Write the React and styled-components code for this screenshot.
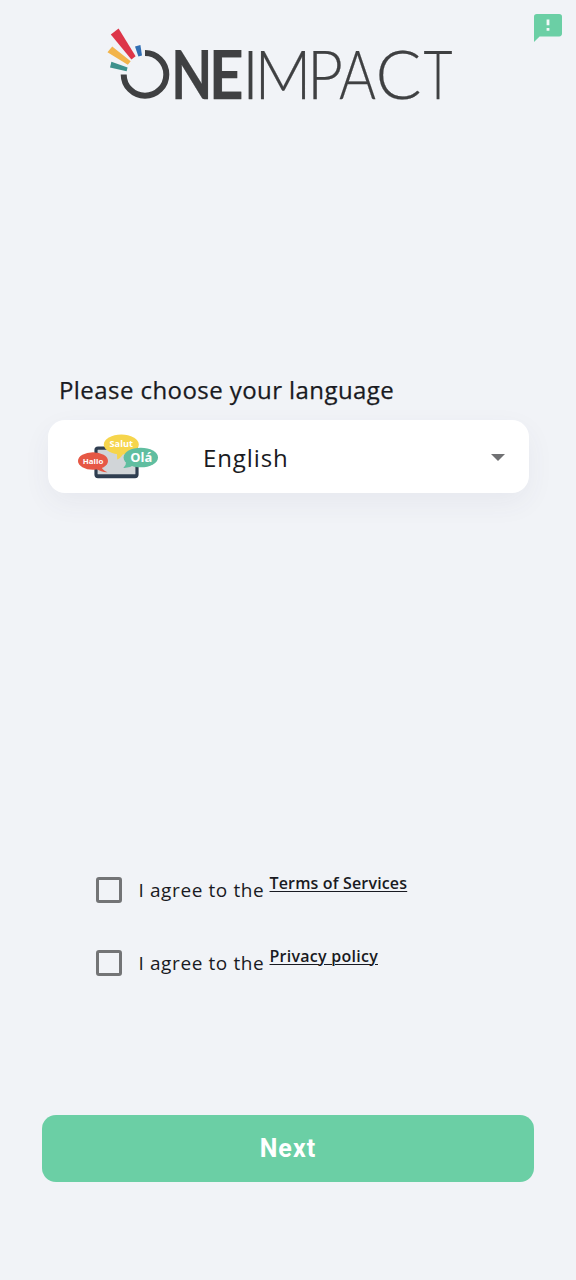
import React from "react";
import styled, { createGlobalStyle } from "styled-components";

const wordmark = [
  { char: "N", x: 171.2, length: 41, weight: 700 },
  { char: "E", x: 209, length: 34.5, weight: 700 },
  { char: "I", x: 242, length: 17, weight: 300 },
  { char: "M", x: 254.5, length: 57, weight: 300 },
  { char: "P", x: 307, length: 36, weight: 300 },
  { char: "A", x: 339, length: 37, weight: 300 },
  { char: "C", x: 375.5, length: 46, weight: 300 },
  { char: "T", x: 423.5, length: 29, weight: 300 },
];

const agreements = [
  { id: "terms", label: "Terms of Services", spacing: "0.16px" },
  { id: "privacy", label: "Privacy policy", spacing: "0.26px" },
];

const Logo = () => (
  <LogoSvg viewBox="106 26 348 76">
    <path d="M110.8 34.4L118.6 28.4L135.6 56.2L131.4 59.6Z" fill="#dd3549" />
    <path d="M107.5 52.3L112.2 46.5L130.7 61.3L127.8 64.8Z" fill="#f2b44b" />
    <path d="M110 67.6L111.4 61.8L127.6 67.5L126.6 71.2Z" fill="#3d918d" />
    <path d="M135 46.6L140.4 45L142 55.4L138.4 56.6Z" fill="#316fb4" />
    <path
      d="M145 53.1A21.3 21.3 0 1 1 123.7 74.4"
      fill="none"
      stroke="#3f4042"
      strokeWidth="6"
    />
    {wordmark.map(({ char, x, length, weight }) => (
      <text
        key={char}
        x={x}
        y="98.7"
        textLength={length}
        lengthAdjust="spacingAndGlyphs"
        fontFamily="Lato, sans-serif"
        fontSize="67"
        fontWeight={weight}
        fill="#3f4042"
        stroke="#3f4042"
        strokeWidth="0.25"
      >
        {char}
      </text>
    ))}
  </LogoSvg>
);

const FeedbackIcon = () => (
  <svg width="28" height="28" viewBox="0 0 28 28">
    <path
      d="M2.8 0H25.2A2.8 2.8 0 0 1 28 2.8V19.6A2.8 2.8 0 0 1 25.2 22.4H5.6L0 28V2.8A2.8 2.8 0 0 1 2.8 0Z"
      fill="#6bcfa5"
    />
    <path d="M12.6 5.6H15.4V11.2H12.6ZM12.6 14H15.4V16.8H12.6Z" fill="#f3f8f9" />
  </svg>
);

const LanguagesIcon = () => (
  <LanguagesSvg viewBox="0 0 82 46">
    <rect x="19" y="14.1" width="41" height="28.5" rx="2" fill="#d1d5d8" stroke="#2f3e50" strokeWidth="3.2" />
    <path d="M19.4 41.8H59.6" stroke="#2f3e50" strokeWidth="3" />
    <path d="M40 19L40.2 25.5Q44.5 23.8 47 18Z" fill="#f6d54c" />
    <ellipse cx="44.3" cy="10.5" rx="17.5" ry="10" fill="#f6d54c" />
    <path d="M23 31Q25 36 30.5 38.3Q25.5 38.8 18 34Z" fill="#e65845" />
    <ellipse cx="16" cy="27" rx="15" ry="8.7" fill="#e65845" />
    <path d="M49 28Q49.5 31 46.3 34Q52.5 34.3 57 31Z" fill="#60bea0" />
    <ellipse cx="63.8" cy="23.5" rx="17.2" ry="9.8" fill="#60bea0" />
    <g fill="#fff" fontFamily="'Open Sans', sans-serif" fontWeight="700">
      <text x="32.5" y="13" fontSize="8.7" textLength="23.5" lengthAdjust="spacingAndGlyphs">Salut</text>
      <text x="5.8" y="29.8" fontSize="7.6" textLength="20.5" lengthAdjust="spacingAndGlyphs">Hallo</text>
      <text x="53.2" y="28" fontSize="12.8" textLength="22" lengthAdjust="spacingAndGlyphs">Olá</text>
    </g>
  </LanguagesSvg>
);

const App = () => {
  return (
    <>
      <GlobalStyle />
      <Page>
        <Header>
          <Logo />
          <FeedbackButton aria-label="Feedback">
            <FeedbackIcon />
          </FeedbackButton>
        </Header>
        <LanguageSection>
          <Title>Please choose your language</Title>
          <LanguageSelect>
            <LanguagesIcon />
            <Language>English</Language>
            <Caret viewBox="0 0 14 7">
              <path d="M0 0H14L7 7Z" fill="#707173" />
            </Caret>
          </LanguageSelect>
        </LanguageSection>
        <Agreements>
          {agreements.map(({ id, label, spacing }) => (
            <Agreement key={id}>
              <Checkbox type="checkbox" id={id} />
              <AgreementLabel htmlFor={id}>I agree to the</AgreementLabel>
              <AgreementLink href={`#${id}`} $spacing={spacing}>
                {label}
              </AgreementLink>
            </Agreement>
          ))}
        </Agreements>
        <NextButton>Next</NextButton>
      </Page>
    </>
  );
};

export default App;

const GlobalStyle = createGlobalStyle`
  * {
    box-sizing: border-box;
  }
  body {
    margin: 0;
    background: #f1f3f7;
    color: #191a22;
    font-family: "Open Sans", sans-serif;
  }
`;

const Page = styled.main`
  display: flex;
  flex-direction: column;
  height: 1280px;
  padding: 14px 42px 98px;
`;

const Header = styled.header`
  display: flex;
  align-items: flex-start;
  justify-content: space-between;
  height: 88px;
  margin-right: -28px;
  padding-left: 64px;
`;

const LogoSvg = styled.svg`
  width: 348px;
  height: 76px;
  margin-top: 12px;
  overflow: visible;
`;

const FeedbackButton = styled.button`
  display: flex;
  padding: 0;
  border: none;
  background: none;
`;

const LanguageSection = styled.section`
  margin: 271px 5.5px 0;
`;

const Title = styled.h1`
  height: 34px;
  margin: 0 0 13px;
  padding-left: 11.5px;
  font-size: 24px;
  font-weight: 400;
  line-height: 33px;
  letter-spacing: 0.43px;
  white-space: nowrap;
  -webkit-text-stroke: 0.25px #191a22;
`;

const LanguageSelect = styled.div`
  display: flex;
  align-items: center;
  height: 73px;
  padding: 0 23.5px 0 29.5px;
  border-radius: 17px;
  background: #fff;
  box-shadow: 0 10px 28px rgba(70, 75, 100, 0.06);
`;

const LanguagesSvg = styled.svg`
  width: 82px;
  height: 46px;
`;

const Language = styled.span`
  margin: 2px 0 0 44px;
  font-size: 24px;
  line-height: 30px;
  letter-spacing: 0.9px;
`;

const Caret = styled.svg`
  width: 14px;
  height: 7px;
  margin: 2px 0 0 auto;
`;

const Agreements = styled.section`
  display: flex;
  flex-direction: column;
  gap: 33px;
  margin: 376.5px 0 0 54px;
`;

const Agreement = styled.div`
  display: flex;
  align-items: center;
  height: 40px;
`;

const Checkbox = styled.input`
  flex: none;
  width: 26px;
  height: 26px;
  margin: 0;
  border: 3px solid #737476;
  border-radius: 3px;
  appearance: none;
  &:checked {
    background: #6bcfa5;
  }
`;

const AgreementLabel = styled.label`
  width: 147.5px;
  padding-left: 16.5px;
  font-size: 19px;
  line-height: 26px;
  letter-spacing: 0.6px;
  white-space: nowrap;
`;

const AgreementLink = styled.a`
  margin-bottom: 14px;
  color: inherit;
  font-size: 16px;
  font-weight: 600;
  line-height: 20px;
  letter-spacing: ${({ $spacing }) => $spacing};
  text-decoration: underline;
  text-decoration-thickness: 1px;
  text-underline-offset: 2px;
  white-space: nowrap;
`;

const NextButton = styled.button`
  flex: none;
  height: 67px;
  margin-top: auto;
  border: none;
  border-radius: 14px;
  background: #6bcfa5;
  color: #fff;
  font-family: Roboto, sans-serif;
  font-size: 25px;
  font-weight: 700;
  letter-spacing: 1.1px;
`;
